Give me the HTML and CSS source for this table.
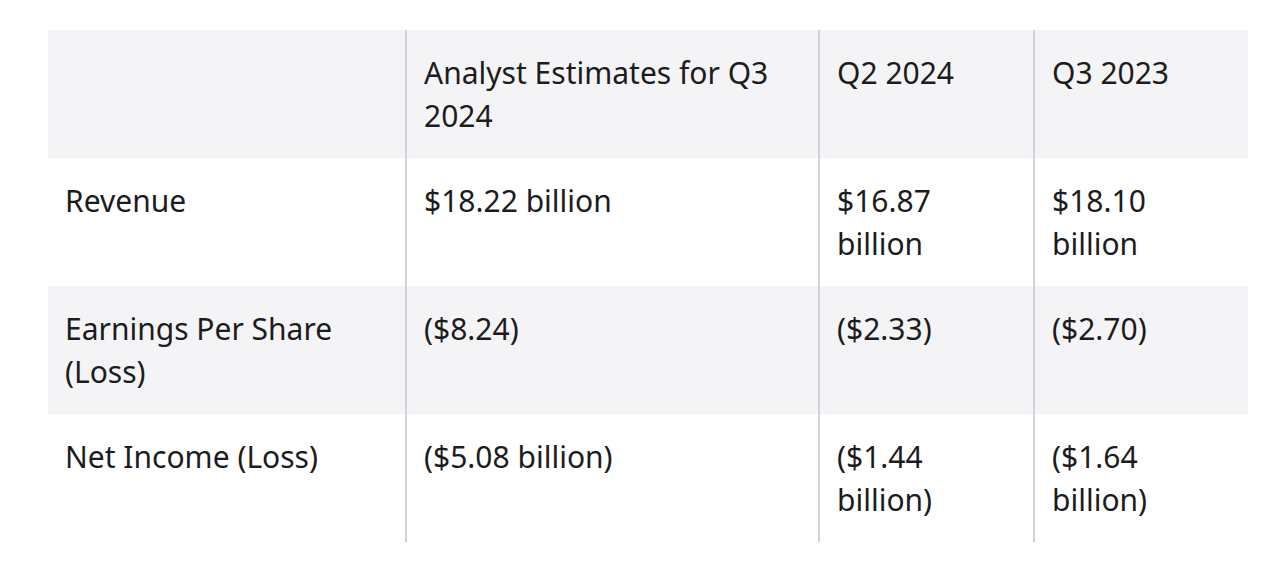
FILE: index.html
```html
<!DOCTYPE html>
<html>
<head>
<meta charset="utf-8">
<link rel="stylesheet" href="styles.css">
</head>
<body>
<table class="fin">
  <colgroup>
    <col class="c1"><col class="c2"><col class="c3"><col class="c4">
  </colgroup>
  <tr class="shade">
    <td></td>
    <td>Analyst Estimates for Q3 2024</td>
    <td>Q2 2024</td>
    <td>Q3 2023</td>
  </tr>
  <tr>
    <td>Revenue</td>
    <td>$18.22 billion</td>
    <td>$16.87 billion</td>
    <td>$18.10 billion</td>
  </tr>
  <tr class="shade">
    <td>Earnings Per Share (Loss)</td>
    <td>($8.24)</td>
    <td>($2.33)</td>
    <td>($2.70)</td>
  </tr>
  <tr>
    <td>Net Income (Loss)</td>
    <td>($5.08 billion)</td>
    <td>($1.44 billion)</td>
    <td>($1.64 billion)</td>
  </tr>
</table>
</body>
</html>
```

FILE: styles.css
```css
html, body {
  margin: 0;
  padding: 0;
  background: #ffffff;
}
body {
  padding: 30px 0 0 48px;
  font-family: "Noto Sans", "Liberation Sans", sans-serif;
  color: #1c1c1e;
}
.fin {
  border-collapse: collapse;
  table-layout: fixed;
  width: 1200px;
  font-size: 30px;
  line-height: 43px;
}
.c1 { width: 358px; }
.c2 { width: 413px; }
.c3 { width: 215px; }
.c4 { width: 214px; }
.fin td {
  height: 128px;
  box-sizing: border-box;
  padding: 21px 18px 21px 17px;
  vertical-align: top;
  border-left: 2px solid #d3d3d7;
}
.fin td:first-child {
  border-left: none;
}
.shade td {
  background: #f4f4f6;
}
```
